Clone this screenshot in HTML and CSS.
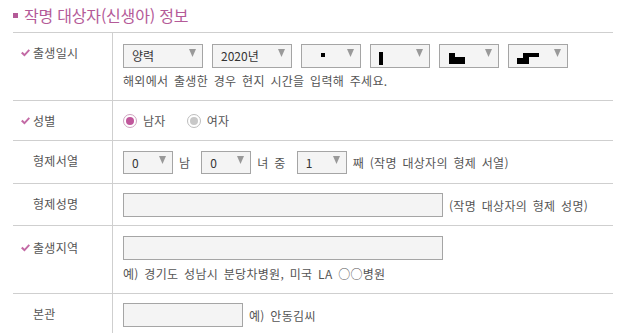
FILE: index.html
```html
<!DOCTYPE html>
<html lang="ko">
<head>
<meta charset="utf-8">
<title>작명 대상자(신생아) 정보</title>
<link rel="stylesheet" href="styles.css">
</head>
<body>
<div class="wrap">
  <h2 class="title"><span class="sq"></span>작명 대상자(신생아) 정보</h2>
  <div class="form">
    <div class="row r1">
      <div class="lbl req"><svg class="chk" viewBox="0 0 9 8" width="9" height="8"><path d="M0 4.2 L1.6 2.8 L3.5 4.7 L7.6 0.3 L9 1.6 L3.5 7.6 Z"/></svg>출생일시</div>
      <div class="fld">
        <div class="line">
          <span class="sel w80"><span class="v">양력</span><svg class="arr" viewBox="0 0 7 8" width="7" height="8"><path d="M0 0 H7 L3.5 8 Z"/></svg></span>
          <span class="sel w80"><span class="v">2020년</span><svg class="arr" viewBox="0 0 7 8" width="7" height="8"><path d="M0 0 H7 L3.5 8 Z"/></svg></span>
          <span class="sel w60"><svg class="blk" viewBox="0 0 32 22" width="32" height="22"><rect x="11" y="8" width="4" height="4"/></svg><svg class="arr" viewBox="0 0 7 8" width="7" height="8"><path d="M0 0 H7 L3.5 8 Z"/></svg></span>
          <span class="sel w60"><svg class="blk" viewBox="0 0 32 22" width="32" height="22"><rect x="0" y="7" width="4" height="13"/></svg><svg class="arr" viewBox="0 0 7 8" width="7" height="8"><path d="M0 0 H7 L3.5 8 Z"/></svg></span>
          <span class="sel w60"><svg class="blk" viewBox="0 0 32 22" width="32" height="22"><rect x="1" y="8" width="6" height="11"/><rect x="7" y="12" width="10" height="7"/></svg><svg class="arr" viewBox="0 0 7 8" width="7" height="8"><path d="M0 0 H7 L3.5 8 Z"/></svg></span>
          <span class="sel w60"><svg class="blk" viewBox="0 0 32 22" width="32" height="22"><rect x="0" y="13" width="6" height="6"/><rect x="6" y="8" width="6" height="11"/><rect x="12" y="8" width="10" height="4"/></svg><svg class="arr" viewBox="0 0 7 8" width="7" height="8"><path d="M0 0 H7 L3.5 8 Z"/></svg></span>
        </div>
        <p class="help h1">해외에서 출생한 경우 현지 시간을 입력해 주세요.</p>
      </div>
    </div>

    <div class="row r2">
      <div class="lbl req"><svg class="chk" viewBox="0 0 9 8" width="9" height="8"><path d="M0 4.2 L1.6 2.8 L3.5 4.7 L7.6 0.3 L9 1.6 L3.5 7.6 Z"/></svg>성별</div>
      <div class="fld">
        <div class="line radios">
          <span class="radio on"><span class="dot"></span></span><span class="rtxt">남자</span>
          <span class="radio"><span class="dot"></span></span><span class="rtxt">여자</span>
        </div>
      </div>
    </div>

    <div class="row r3">
      <div class="lbl">형제서열</div>
      <div class="fld">
        <div class="line">
          <span class="sel w50 h23"><span class="v">0</span><svg class="arr" viewBox="0 0 7 8" width="7" height="8"><path d="M0 0 H7 L3.5 8 Z"/></svg></span>
          <span class="txt t1">남</span>
          <span class="sel w50 h23"><span class="v">0</span><svg class="arr" viewBox="0 0 7 8" width="7" height="8"><path d="M0 0 H7 L3.5 8 Z"/></svg></span>
          <span class="txt t2">녀 중</span>
          <span class="sel w50 h23"><span class="v">1</span><svg class="arr" viewBox="0 0 7 8" width="7" height="8"><path d="M0 0 H7 L3.5 8 Z"/></svg></span>
          <span class="txt t3">째 (작명 대상자의 형제 서열)</span>
        </div>
      </div>
    </div>

    <div class="row r4">
      <div class="lbl">형제성명</div>
      <div class="fld">
        <div class="line">
          <input class="inp w320" type="text">
          <span class="txt t4">(작명 대상자의 형제 성명)</span>
        </div>
      </div>
    </div>

    <div class="row r5">
      <div class="lbl req"><svg class="chk" viewBox="0 0 9 8" width="9" height="8"><path d="M0 4.2 L1.6 2.8 L3.5 4.7 L7.6 0.3 L9 1.6 L3.5 7.6 Z"/></svg>출생지역</div>
      <div class="fld">
        <div class="line">
          <input class="inp w320" type="text">
        </div>
        <p class="help h5">예) 경기도 성남시 분당차병원, 미국 LA ○○병원</p>
      </div>
    </div>

    <div class="row r6">
      <div class="lbl">본관</div>
      <div class="fld">
        <div class="line">
          <input class="inp w120" type="text">
          <span class="txt t4">예) 안동김씨</span>
        </div>
      </div>
    </div>
  </div>
</div>
</body>
</html>
```

FILE: styles.css
```css
* { box-sizing: border-box; }

html, body {
  margin: 0;
  padding: 0;
  background: #fff;
}

body {
  font-family: "Noto Sans CJK KR", "Noto Sans", sans-serif;
  font-size: 12px;
  color: #555;
  letter-spacing: 0.3px;
  word-spacing: 2px;
}

.wrap {
  padding-left: 13px;
  width: 627px;
  height: 333px;
  overflow: hidden;
}

.title {
  margin: 0;
  height: 32px;
  padding-bottom: 2px;
  display: flex;
  align-items: center;
  gap: 6px;
  font-size: 16px;
  font-weight: normal;
  color: #b45a98;
  letter-spacing: -0.2px;
  word-spacing: 0;
}

.sq {
  width: 5px;
  height: 5px;
  background: #b45a98;
}

.form {
  width: 600px;
  border-top: 1px solid #cfcfcf;
}

.row {
  display: grid;
  grid-template-columns: 100px 1fr;
  border-bottom: 1px solid #cfcfcf;
}

.lbl {
  border-right: 1px solid #cfcfcf;
  padding-left: 20px;
  padding-top: 8px;
  line-height: 24px;
  display: flex;
  align-items: flex-start;
  color: #555;
}

.chk {
  fill: #c36aa5;
  margin-left: -12px;
  margin-right: 3px;
  margin-top: 8px;
  flex: none;
}

.fld {
  padding-left: 10px;
}

.line {
  display: flex;
  align-items: center;
}

.sel {
  display: inline-flex;
  align-items: center;
  justify-content: space-between;
  height: 24px;
  border: 1px solid #a5a5a5;
  background: #f4f4f4;
  padding: 0 6px 0 8px;
  color: #333;
  margin-right: 9px;
  flex: none;
  letter-spacing: 0;
}

.sel .v { line-height: 20px; }

.h23 { height: 23px; }

.w80 { width: 80px; }
.w60 { width: 60px; }
.w50 { width: 50px; }

.arr {
  fill: #999;
  align-self: flex-start;
  margin-top: 4px;
  flex: none;
}

.blk {
  fill: #000;
  align-self: flex-start;
}

.inp {
  height: 24px;
  border: 1px solid #a5a5a5;
  background: #f4f4f4;
  margin: 0;
  padding: 0 6px;
  font: inherit;
  flex: none;
}

.w320 { width: 320px; }
.w120 { width: 120px; }

.help {
  margin: 0;
  line-height: 16px;
  color: #555;
}

/* row 1 */
.r1 .fld { padding-top: 11px; padding-bottom: 11px; }
.r1 .help { margin-top: 5px; }
.r1 .lbl { padding-top: 8px; }

/* row 2 */
.r2 .lbl { padding-top: 0; align-items: center; height: 39px; }
.r2 .chk { margin-top: 0; }
.r2 .fld { height: 39px; display: flex; align-items: center; }

.radio {
  width: 14px;
  height: 14px;
  border-radius: 50%;
  border: 1px solid #bdbdbd;
  background: #fff;
  display: inline-flex;
  align-items: center;
  justify-content: center;
  flex: none;
}

.radio .dot {
  width: 8px;
  height: 8px;
  border-radius: 50%;
  background: #c8c8c8;
}

.radio.on { border-color: #cfa3bf; }
.radio.on .dot { background: #c0579b; }

.rtxt {
  margin-left: 6px;
  margin-right: 21px;
}

/* row 3 */
.r3 .fld { padding-top: 10px; padding-bottom: 9px; }
.r3 .lbl { padding-top: 8px; }
.r3 .sel { margin-right: 0; }
.txt { flex: none; }
.t1 { margin-left: 6px; margin-right: 11px; }
.t2 { margin-left: 6px; margin-right: 11px; }
.t3 { margin-left: 6px; }
.t4 { margin-left: 6px; }

/* row 4 */
.r4 .fld { padding-top: 9px; padding-bottom: 8px; }
.r4 .lbl { padding-top: 8px; }

/* row 5 */
.r5 .fld { padding-top: 10px; padding-bottom: 11px; }
.r5 .lbl { padding-top: 10px; }
.r5 .help { margin-top: 6px; }

/* row 6 */
.r6 .fld { padding-top: 9px; padding-bottom: 9px; }
.r6 .lbl { padding-top: 8px; }
```
